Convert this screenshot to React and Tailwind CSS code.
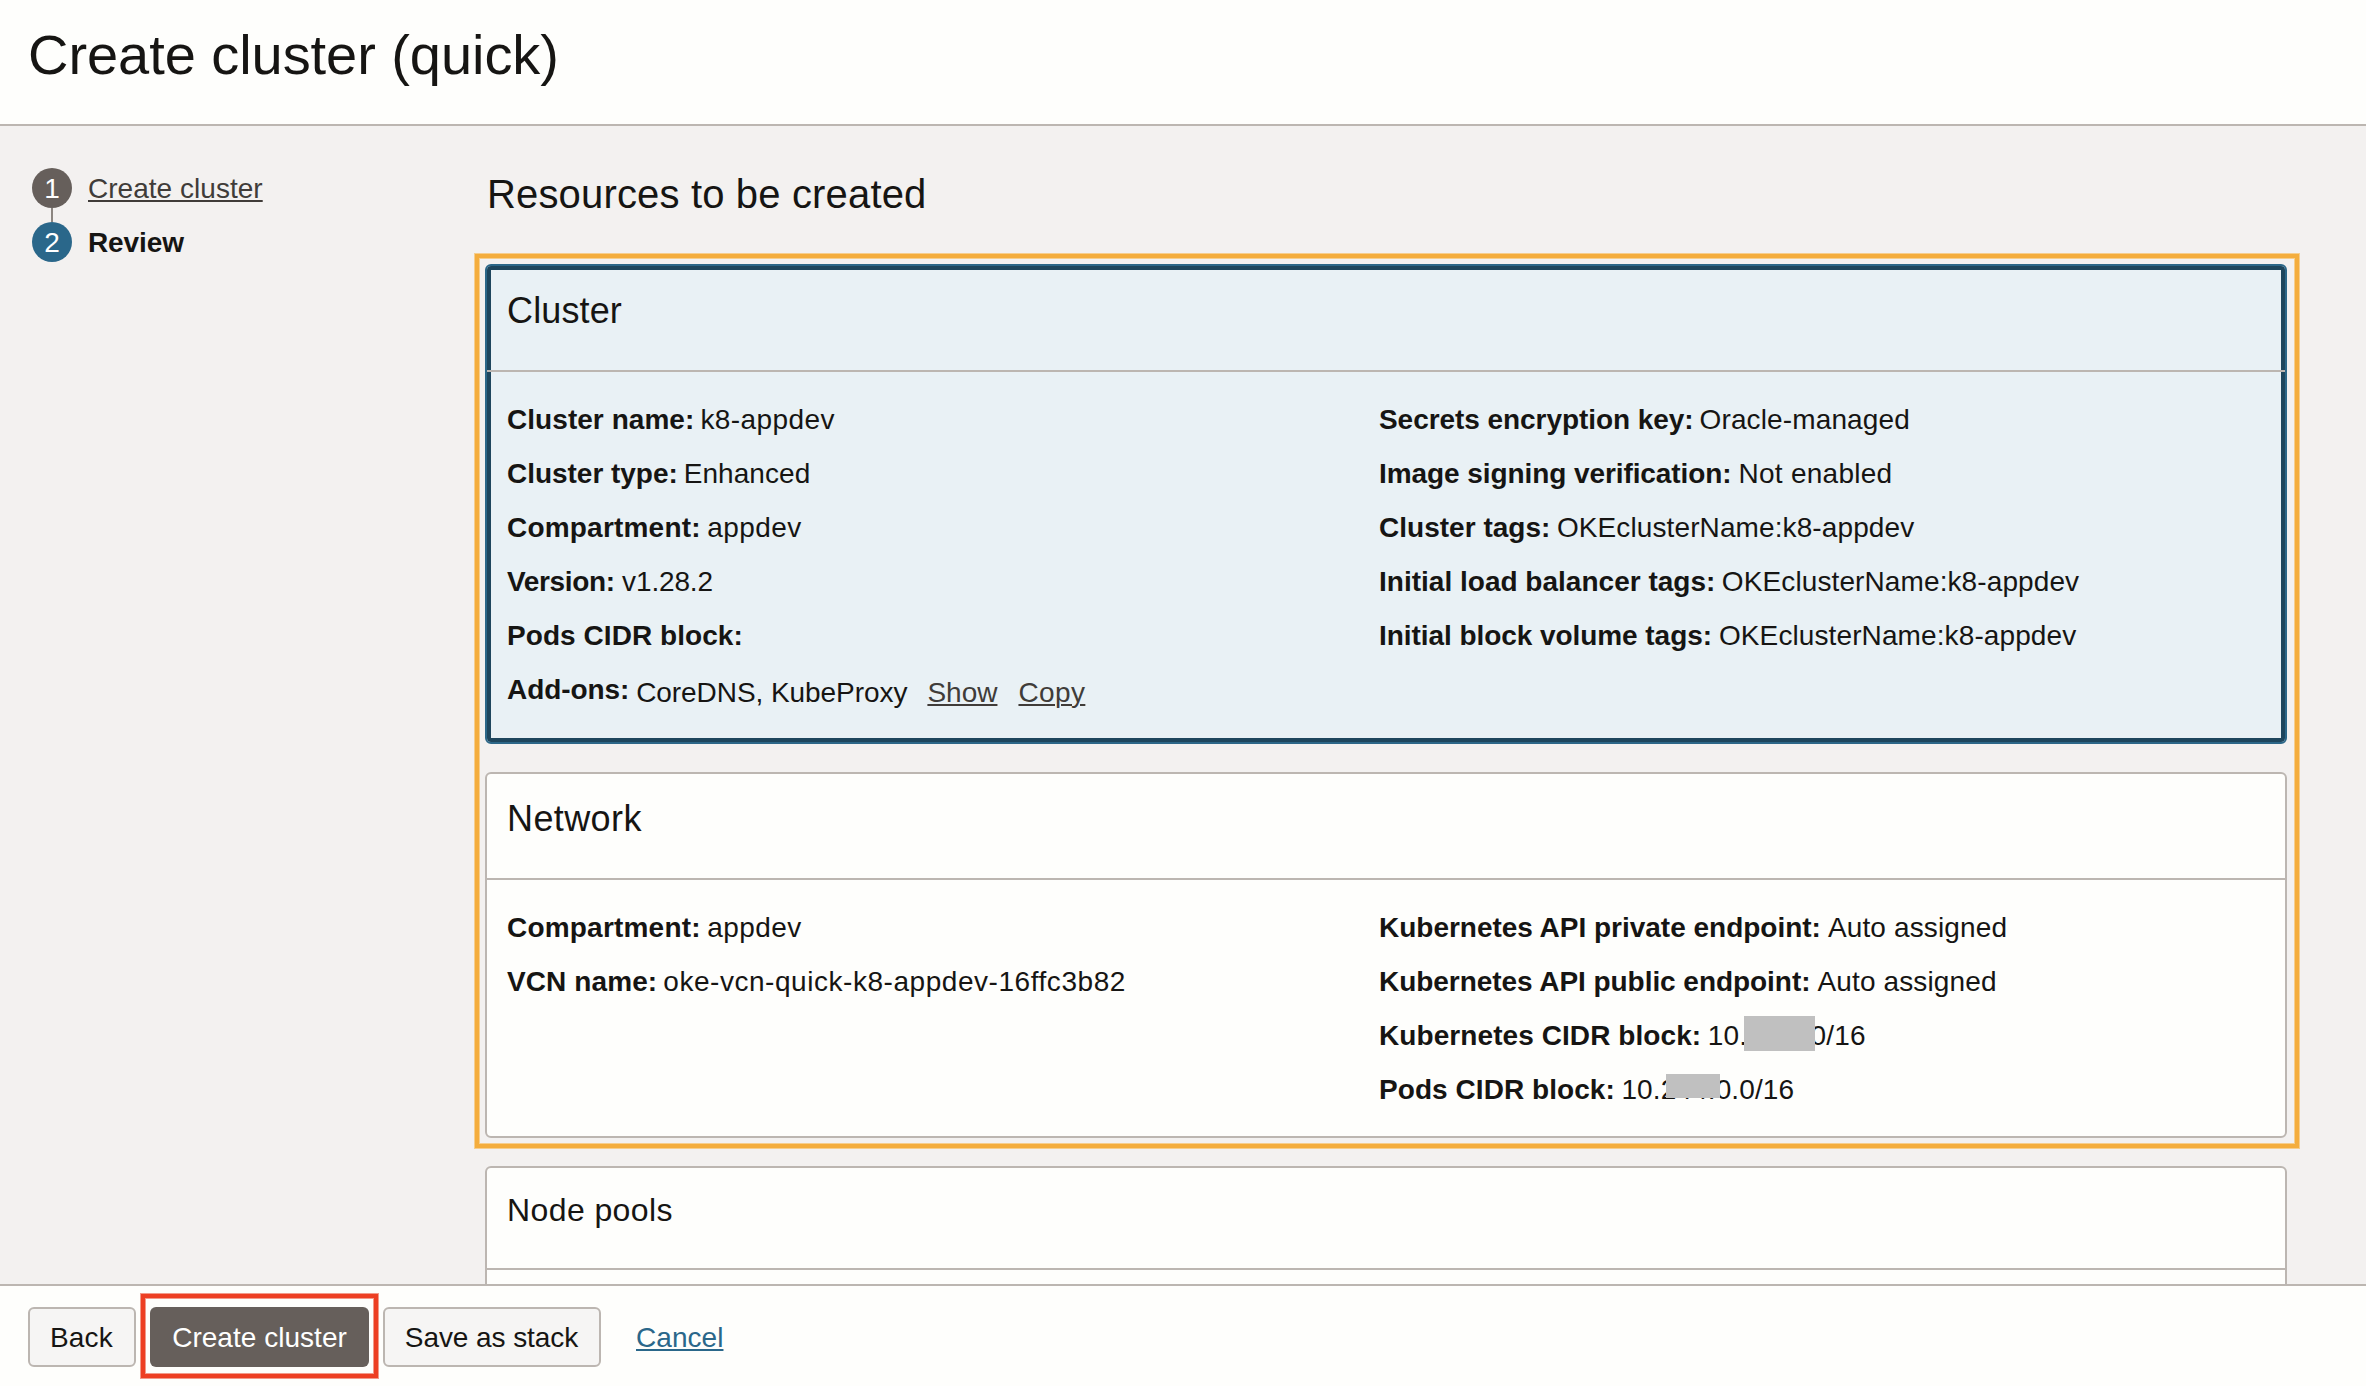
import React from "react";

const clusterLeft = [
  { label: "Cluster name:", lt: "tracking-[0.05px]", value: "k8-appdev", vt: "tracking-[0.42px]" },
  { label: "Cluster type:", lt: "tracking-[-0.03px]", value: "Enhanced", vt: "tracking-[0.05px]" },
  { label: "Compartment:", lt: "tracking-[0.2px]", value: "appdev", vt: "tracking-[0.45px]", gap: "gap-[6.5px]" },
  { label: "Version:", lt: "tracking-[-0.36px]", value: "v1.28.2", vt: "tracking-[-0.15px]", gap: "gap-[7.5px]" },
  { label: "Pods CIDR block:", lt: "tracking-[0.06px]" },
];

const clusterRight = [
  { label: "Secrets encryption key:", lt: "tracking-[-0.06px]", value: "Oracle-managed", vt: "tracking-[0.13px]" },
  { label: "Image signing verification:", lt: "tracking-[-0.08px]", value: "Not enabled", vt: "tracking-[0.25px]", gap: "gap-[7px]" },
  { label: "Cluster tags:", lt: "tracking-[0.02px]", value: "OKEclusterName:k8-appdev", vt: "tracking-[0.106px]", gap: "gap-[6.5px]" },
  { label: "Initial load balancer tags:", lt: "tracking-[0.01px]", value: "OKEclusterName:k8-appdev", vt: "tracking-[0.106px]", gap: "gap-[6.5px]" },
  { label: "Initial block volume tags:", lt: "tracking-[-0.06px]", value: "OKEclusterName:k8-appdev", vt: "tracking-[0.106px]", gap: "gap-[7px]" },
];

const networkLeft = [
  { label: "Compartment:", lt: "tracking-[0.2px]", value: "appdev", vt: "tracking-[0.45px]", gap: "gap-[6.5px]" },
  { label: "VCN name:", lt: "tracking-[0.1px]", value: "oke-vcn-quick-k8-appdev-16ffc3b82", vt: "tracking-[0.545px]" },
];

const networkRight = [
  { label: "Kubernetes API private endpoint:", lt: "tracking-[-0.015px]", value: "Auto assigned", vt: "tracking-[0.14px]", gap: "gap-[7px]" },
  { label: "Kubernetes API public endpoint:", lt: "tracking-[-0.05px]", value: "Auto assigned", vt: "tracking-[0.14px]", gap: "gap-[7px]" },
  { label: "Kubernetes CIDR block:", lt: "tracking-[0.08px]", value: "10.96.0.0/16", vt: "tracking-[0.2px]", gap: "gap-[6.5px]", mask: "left-[36px] top-2 h-[35px] w-[71px]" },
  { label: "Pods CIDR block:", lt: "tracking-[0.06px]", value: "10.244.0.0/16", vt: "tracking-[0.125px]", gap: "gap-[6.5px]", mask: "left-[45px] top-3 h-6 w-[54px]" },
];

function Row({ label, lt, value, vt, gap = "gap-[6px]", mask }) {
  return (
    <div className={`flex h-[54px] whitespace-nowrap leading-[55px] ${gap}`}>
      <span className={`font-bold ${lt}`}>{label}</span>
      {value && (
        <span className={`relative ${vt}`}>
          {value}
          {mask && <span className={`absolute bg-[#c0c0c0] ${mask}`} />}
        </span>
      )}
    </div>
  );
}

function Rows({ items }) {
  return items.map((item) => <Row key={item.label} {...item} />);
}

function Step({ number, color, children }) {
  return (
    <li className="flex h-10 items-start gap-4 leading-[41px]">
      <span className={`size-10 rounded-full text-center text-white ${color}`}>{number}</span>
      {children}
    </li>
  );
}

export default function App() {
  return (
    <div className="flex h-[1386px] w-[2366px] flex-col overflow-hidden bg-[#f3f1f0] font-['Liberation_Sans',Arial,sans-serif] text-[28px] text-[#161513]">
      <header className="h-[126px] shrink-0 border-b-2 border-[#bcb6b1] bg-[#fefefc] pl-7 pt-[23px]">
        <h1 className="text-[56px] leading-[64px] tracking-[-0.06px]">Create cluster (quick)</h1>
      </header>

      <div className="flex min-h-0 flex-1 overflow-hidden">
        <nav className="w-[485px] shrink-0 pl-8 pt-[42px]">
          <ol>
            <Step number="1" color="bg-[#665f5b]">
              <a className="tracking-[0.03px] text-[#403c39] underline decoration-2 underline-offset-[2px]">Create cluster</a>
            </Step>
            <li className="ml-[19px] h-[14px] w-[2px] bg-[#8b8580]" />
            <Step number="2" color="bg-[#2a678a]">
              <span className="font-bold tracking-[-0.1px]">Review</span>
            </Step>
          </ol>
        </nav>

        <main className="w-[1802px] shrink-0 pt-[46px]">
          <h2 className="pl-[2px] text-[40px] leading-[44px] tracking-[0.16px]">Resources to be created</h2>

          <div className="relative mt-12 flex flex-col gap-7">
            <section className="h-[480px] rounded-[6px] border-2 border-[#2c6788] bg-[#e9f1f5] shadow-[inset_0_0_0_4px_#1e465d]">
              <h3 className="h-[106px] border-b-2 border-[#bcb6b1] pl-5 pt-6 text-[36px] leading-[41px] tracking-[0.13px]">Cluster</h3>
              <div className="flex pl-5 pt-5">
                <div className="w-[872px]">
                  <Rows items={clusterLeft} />
                  <div className="flex h-[54px] whitespace-nowrap leading-[55px]">
                    <span className="font-bold tracking-[-0.09px]">Add-ons:</span>
                    <span className="ml-[7px] mt-[3px] tracking-[-0.06px]">CoreDNS, KubeProxy</span>
                    <a className="ml-5 mt-[3px] text-[#403c39] underline decoration-2 underline-offset-[2px]">Show</a>
                    <a className="ml-[21px] mt-[3px] tracking-[0.38px] text-[#403c39] underline decoration-2 underline-offset-[2px]">Copy</a>
                  </div>
                </div>
                <div>
                  <Rows items={clusterRight} />
                </div>
              </div>
            </section>

            <section className="h-[366px] rounded-[6px] border-2 border-[#bcb6b1] bg-[#fefefc]">
              <h3 className="h-[106px] border-b-2 border-[#bcb6b1] pl-5 pt-6 text-[36px] leading-[41px] tracking-[0.4px]">Network</h3>
              <div className="flex pl-5 pt-5">
                <div className="w-[872px]">
                  <Rows items={networkLeft} />
                </div>
                <div>
                  <Rows items={networkRight} />
                </div>
              </div>
            </section>

            <div className="pointer-events-none absolute -bottom-[10px] -left-[10px] -right-[12px] -top-[10px] border-4 border-[#f4ad3d] shadow-[0_0_0_1px_#f6ce8d,inset_0_0_0_1px_#f6ce8d]" />
          </div>

          <section className="mt-7 h-[300px] rounded-[6px] border-2 border-[#bcb6b1] bg-[#fefefc]">
            <h3 className="h-[102px] border-b-2 border-[#bcb6b1] pl-5 pt-6 text-[32px] leading-9 tracking-[0.4px]">Node pools</h3>
          </section>
        </main>
      </div>

      <footer className="flex h-[102px] shrink-0 items-start border-t-2 border-[#bcb6b1] bg-[#fefefc] pl-7 pt-[21px]">
        <button className="h-[60px] w-[108px] rounded-[6px] border-2 border-[#bcb6b1] bg-[#f6f5f4] pr-px pt-px leading-[55px] tracking-[0.25px]">Back</button>
        <div className="relative ml-[14px]">
          <button className="block h-[60px] w-[219px] rounded-[6px] bg-[#665f5b] pt-px leading-[59px] tracking-[0.03px] text-white">Create cluster</button>
          <div className="pointer-events-none absolute -bottom-[11px] -left-[9px] -right-[9px] -top-[13px] border-4 border-[#ed3f23] shadow-[0_0_0_1px_#f29a8a,inset_0_0_0_1px_#f29a8a]" />
        </div>
        <button className="ml-[14px] h-[60px] w-[218px] rounded-[6px] border-2 border-[#bcb6b1] bg-[#f6f5f4] pr-px pt-px leading-[55px] tracking-[-0.07px]">Save as stack</button>
        <a className="ml-[35px] leading-[61px] tracking-[0.05px] text-[#2a678a] underline decoration-2 underline-offset-[2px]">Cancel</a>
      </footer>
    </div>
  );
}
